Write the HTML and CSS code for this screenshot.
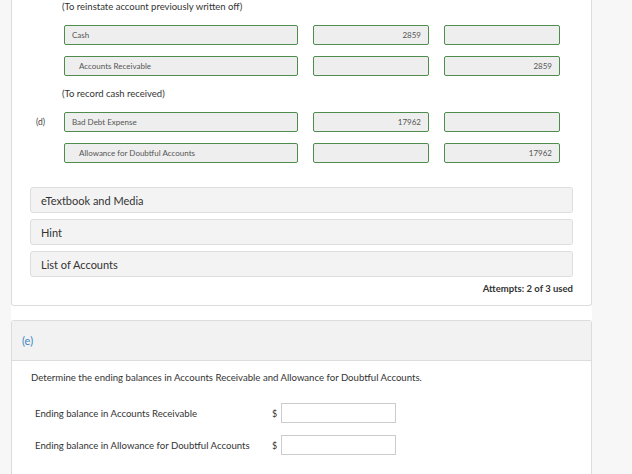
FILE: index.html
```html
<!DOCTYPE html>
<html>
<head>
<meta charset="utf-8">
<link rel="stylesheet" href="styles.css">
</head>
<body>
<div class="main">
  <section class="card card-top">
    <p class="note">(To reinstate account previously written off)</p>
    <div class="entry">
      <span class="tag"></span>
      <div class="field acct">Cash</div>
      <div class="field amt">2859</div>
      <div class="field amt"></div>
    </div>
    <div class="entry">
      <span class="tag"></span>
      <div class="field acct indent">Accounts Receivable</div>
      <div class="field amt"></div>
      <div class="field amt">2859</div>
    </div>
    <p class="note">(To record cash received)</p>
    <div class="entry">
      <span class="tag">(d)</span>
      <div class="field acct">Bad Debt Expense</div>
      <div class="field amt">17962</div>
      <div class="field amt"></div>
    </div>
    <div class="entry entry-last">
      <span class="tag"></span>
      <div class="field acct indent">Allowance for Doubtful Accounts</div>
      <div class="field amt"></div>
      <div class="field amt">17962</div>
    </div>
    <div class="links">
      <div class="link">eTextbook and Media</div>
      <div class="link">Hint</div>
      <div class="link">List of Accounts</div>
    </div>
    <div class="attempts">Attempts: 2 of 3 used</div>
  </section>

  <section class="card card-e">
    <header class="card-head">(e)</header>
    <div class="card-body">
      <p class="question">Determine the ending balances in Accounts Receivable and Allowance for Doubtful Accounts.</p>
      <div class="answer">
        <span class="answer-label">Ending balance in Accounts Receivable</span>
        <span class="dollar">$</span>
        <span class="answer-input"></span>
      </div>
      <div class="answer">
        <span class="answer-label">Ending balance in Allowance for Doubtful Accounts</span>
        <span class="dollar">$</span>
        <span class="answer-input"></span>
      </div>
    </div>
  </section>
</div>
</body>
</html>
```

FILE: styles.css
```css
* { box-sizing: border-box; }
html, body { margin: 0; padding: 0; }
body {
  background: #f7f7f7;
  font-family: Lato, "Liberation Sans", sans-serif;
  color: #333;
  height: 474px;
  overflow: hidden;
}
.main {
  margin-left: 11px;
  width: 581px;
  background: #fff;
  min-height: 474px;
  display: flex;
  flex-direction: column;
  gap: 14px;
}
.card {
  border: 1px solid #dcdcdc;
  background: #fff;
  border-radius: 3px;
}
.card-top {
  border-top: none;
  border-radius: 0 0 3px 3px;
  padding: 0 18px 9px 13px;
}
.note {
  margin: 0 0 11px 37px;
  font-size: 9.5px;
  line-height: 14px;
  color: #333;
}
.entry {
  display: flex;
  align-items: center;
  margin-bottom: 11px;
}
.entry-last { margin-bottom: 24px; }
.tag {
  width: 39px;
  padding-left: 11px;
  font-size: 8.5px;
  color: #444;
}
.field {
  height: 20px;
  background: #eee;
  border: 1.5px solid #4f8d4f;
  border-radius: 2px;
  font-size: 8px;
  color: #555;
  display: flex;
  align-items: center;
  padding: 0 7px;
}
.acct { width: 234px; }
.amt { width: 116px; margin-left: 15px; justify-content: flex-end; }
.indent { padding-left: 14px; }
.links {
  display: flex;
  flex-direction: column;
  gap: 6px;
  margin-left: 5px;
}
.link {
  height: 26px;
  background: #f3f3f3;
  border: 1px solid #dedede;
  border-radius: 3px;
  font-size: 11px;
  color: #333;
  display: flex;
  align-items: center;
  padding-left: 10px;
}
.attempts {
  text-align: right;
  font-size: 9.5px;
  font-weight: bold;
  color: #333;
  margin-top: 5px;
  line-height: 14px;
}
.card-e { flex: 1; border-bottom: none; border-radius: 3px 3px 0 0; }
.card-head {
  height: 40px;
  background: #f2f2f2;
  border-bottom: 1px solid #dcdcdc;
  color: #3a87c4;
  font-size: 11px;
  display: flex;
  align-items: center;
  padding-left: 10px;
}
.card-body { padding: 10px 0 0 19px; }
.question {
  margin: 0 0 18px;
  font-size: 9.6px;
  line-height: 14px;
}
.answer {
  display: flex;
  align-items: center;
  margin-bottom: 12px;
  margin-left: 4px;
}
.answer-label { width: 237px; font-size: 9.6px; }
.dollar { width: 9px; font-size: 9px; }
.answer-input {
  width: 115px;
  height: 20px;
  border: 1px solid #ccc;
  background: #fff;
}
```
